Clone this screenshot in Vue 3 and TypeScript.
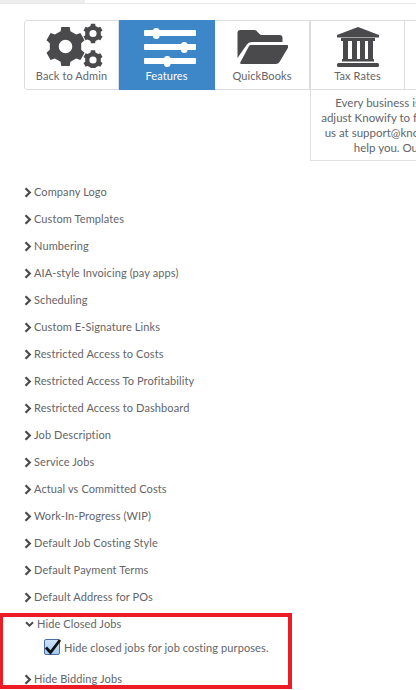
<script setup lang="ts">
import { ref } from "vue";

const tabs = [
  { label: "Back to Admin", icon: "gears" },
  { label: "Features", icon: "sliders", active: true },
  { label: "QuickBooks", icon: "folder" },
  { label: "Tax Rates", icon: "bank" },
  { label: "", icon: "" },
];

const sections = ref([
  { title: "Company Logo" },
  { title: "Custom Templates" },
  { title: "Numbering" },
  { title: "AIA-style Invoicing (pay apps)" },
  { title: "Scheduling" },
  { title: "Custom E-Signature Links" },
  { title: "Restricted Access to Costs" },
  { title: "Restricted Access To Profitability" },
  { title: "Restricted Access to Dashboard" },
  { title: "Job Description" },
  { title: "Service Jobs" },
  { title: "Actual vs Committed Costs" },
  { title: "Work-In-Progress (WIP)" },
  { title: "Default Job Costing Style" },
  { title: "Default Payment Terms" },
  { title: "Default Address for POs" },
  { title: "Hide Closed Jobs", open: true, option: "Hide closed jobs for job costing purposes." },
  { title: "Hide Bidding Jobs" },
]);

const checked = ref(true);

// gear outline, teeth around a circle, one tooth pointing up
const gear = (cx: number, cy: number, r: number, hole: number, teeth = 6) => {
  let d = "";
  const step = (Math.PI * 2) / teeth;
  for (let i = 0; i < teeth; i++) {
    const a = i * step - Math.PI / 2;
    const w = step * 0.2;
    const pts = [
      [a - w * 1.5, r * 0.8],
      [a - w, r],
      [a + w, r],
      [a + w * 1.5, r * 0.8],
    ];
    pts.forEach(([t, l], j) => {
      const x = (cx + Math.cos(t) * l).toFixed(1);
      const y = (cy + Math.sin(t) * l).toFixed(1);
      d += `${i === 0 && j === 0 ? "M" : "L"}${x} ${y}`;
    });
  }
  d += `Z M${cx - hole} ${cy}a${hole} ${hole} 0 1 0 ${hole * 2} 0a${hole} ${hole} 0 1 0 ${-hole * 2} 0Z`;
  return d;
};
</script>

<template>
  <div class="page">
    <div class="topbar"><div class="topbar-gray"></div></div>

    <div class="tabs">
      <div v-for="tab in tabs" :key="tab.icon" class="tab" :class="{ active: tab.active }">
        <svg v-if="tab.icon === 'gears'" class="icon" width="62" height="46" viewBox="0 0 62 46">
          <path fill-rule="evenodd" :d="gear(24.5, 24.5, 20, 6.8)" fill="#4a4a4c" />
          <path fill-rule="evenodd" :d="gear(52, 11.5, 10, 3.6)" fill="#4a4a4c" />
          <path fill-rule="evenodd" :d="gear(52, 38, 10, 3.6)" fill="#4a4a4c" />
        </svg>
        <svg v-else-if="tab.icon === 'sliders'" class="icon" width="60" height="46" viewBox="0 0 60 46" fill="#fff">
          <rect x="7" y="8" width="52" height="6" rx="1" />
          <rect x="7" y="22" width="52" height="6" rx="1" />
          <rect x="7" y="36" width="52" height="6" rx="1" />
          <rect x="16" y="6" width="6.5" height="11" rx="3.2" />
          <rect x="44" y="20" width="6.5" height="11" rx="3.2" />
          <rect x="27" y="34" width="6.5" height="11" rx="3.2" />
        </svg>
        <svg v-else-if="tab.icon === 'folder'" class="icon" width="52" height="46" viewBox="-1.5 -2 52 46" fill="#4a4a4c">
          <path d="M0 9q0-3 3-3h14q2 0 3 2l2 2q1 1 2 1h18q3 0 3 3v4H14q-3 0-5 3L0 34Z" />
          <path d="M13 21h36q3 0 2 2l-9 15q-1 2-4 2H4q-2 0-1-2l8-15q1-2 2-2Z" />
        </svg>
        <svg v-else-if="tab.icon === 'bank'" class="icon" width="44" height="46" viewBox="0 0 44 46" fill="#4a4a4c">
          <path d="M22 5 43 13v2.5H1V13Z" />
          <rect x="5" y="16" width="34" height="3" />
          <rect x="7" y="19" width="5" height="18" />
          <rect x="16" y="19" width="5" height="18" />
          <rect x="24" y="19" width="5" height="18" />
          <rect x="32" y="19" width="5" height="18" />
          <rect x="6" y="37" width="32" height="2.5" />
          <rect x="1" y="41" width="42" height="4" rx="1.5" />
        </svg>
        <span class="tab-label">{{ tab.label }}</span>
      </div>
    </div>

    <div class="note">
      <div class="note-text">
        <p>Every business is different, so we</p>
        <p>adjust Knowify to fit your needs. Email</p>
        <p>us at support@knowify.com and we'll</p>
        <p>help you. Our team cares.</p>
      </div>
    </div>

    <ul class="list">
      <li v-for="s in sections" :key="s.title" class="item">
        <div class="item-head" :class="{ open: s.open }">
          <svg v-if="s.open" class="chev-down" width="9" height="7" viewBox="0 0 9 7">
            <path d="M1 1.2 4.5 4.7 8 1.2" fill="none" stroke="#4a4a4c" stroke-width="2" />
          </svg>
          <svg v-else class="chev" width="8" height="11" viewBox="0 0 8 11">
            <path d="M1.5 1.2 5.8 5.5 1.5 9.8" fill="none" stroke="#4a4a4c" stroke-width="2.2" />
          </svg>
          <span>{{ s.title }}</span>
        </div>
        <label v-if="s.option" class="option">
          <span class="check">
            <svg v-if="checked" width="19" height="18" viewBox="0 0 19 18">
              <path d="M3 9.5 7.5 14.5 17 2" fill="none" stroke="#111" stroke-width="2.8" />
            </svg>
          </span>
          <span>{{ s.option }}</span>
        </label>
      </li>
    </ul>

    <div class="highlight"></div>
  </div>
</template>

<style>
html,
body {
  margin: 0;
  background: #fff;
}
</style>

<style scoped>
.page {
  position: relative;
  width: 416px;
  height: 690px;
  overflow: hidden;
  background: #fff;
  font-family: Lato, "Open Sans", sans-serif;
  color: #636569;
}

.topbar {
  height: 3px;
  border-bottom: 1px solid #e8e8e8;
}

.topbar-gray {
  width: 85px;
  height: 3px;
  background: #eee;
}

.tabs {
  display: flex;
  width: 430px;
  height: 70px;
  margin: 16px 0 0 24px;
}

.tab {
  flex: 0 0 95px;
  box-sizing: border-box;
  height: 70px;
  display: flex;
  flex-direction: column;
  align-items: center;
  justify-content: flex-end;
  padding-bottom: 6px;
  border: 1px solid #ddd;
  border-left: 0;
  font-size: 11px;
  letter-spacing: 0.1px;
}

.tab:first-child {
  border-left: 1px solid #ddd;
  border-radius: 3px 0 0 3px;
}

.tab:nth-child(2) {
  flex-basis: 96px;
}

.tab:nth-child(3) {
  flex-basis: 96px;
  border-right-width: 2px;
}

.tab:nth-child(4) {
  flex-basis: 94px;
}

.tab.active {
  background: #3d87c8;
  border-color: #3d87c8;
  color: #fff;
}

.icon {
  display: block;
  margin-bottom: 1px;
}

.tab-label {
  line-height: 14px;
}

.note {
  box-sizing: border-box;
  width: 125px;
  height: 71px;
  margin-left: 310px;
  border: 1px solid #e0e0e0;
  border-top: 0;
  border-right: 0;
  overflow: hidden;
}

.note-text {
  width: 214px;
  padding-top: 5px;
  font-size: 11.5px;
  line-height: 15px;
  text-align: center;
}

.note-text p {
  margin: 0;
  white-space: nowrap;
}

.list {
  list-style: none;
  margin: 0;
  padding: 24px 0 0 24px;
  font-size: 11px;
  letter-spacing: 0.1px;
}

.item {
  margin-bottom: 13px;
}

.item-head {
  display: flex;
  align-items: center;
  gap: 2px;
  height: 14px;
  line-height: 14px;
}

.item-head.open {
  margin-left: 1px;
  gap: 3px;
}

.option {
  display: flex;
  align-items: center;
  gap: 4px;
  margin: 7px 0 16px 20px;
  height: 18px;
}

.check {
  box-sizing: border-box;
  width: 16px;
  height: 16px;
  display: flex;
  align-items: center;
  justify-content: center;
  border: 1px solid #4a6fa5;
  border-radius: 2px;
  background: linear-gradient(#cfe3fa, #a5c9f0);
}

.check svg {
  flex: none;
}

.highlight {
  position: absolute;
  left: -1px;
  top: 613px;
  width: 293px;
  height: 76px;
  box-sizing: border-box;
  border: 4px solid #ed1c24;
  pointer-events: none;
}
</style>
